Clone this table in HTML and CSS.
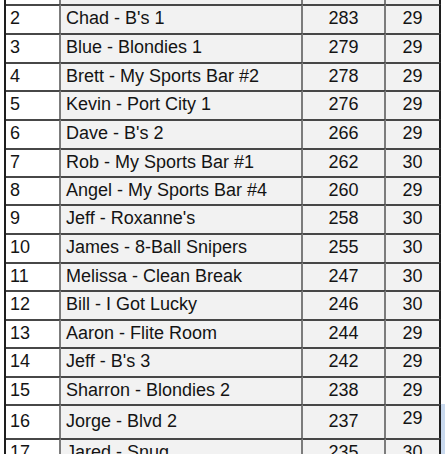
FILE: index.html
```html
<!DOCTYPE html>
<html>
<head>
<meta charset="utf-8">
<link rel="stylesheet" href="styles.css">
</head>
<body>
<div class="viewport">
  <div class="sheet">
    <div class="row r29"><div class="c n"></div><div class="c t"></div><div class="c m"></div><div class="c p"></div><div class="out"></div></div>
    <div class="row r29"><div class="c n">2</div><div class="c t">Chad - B's 1</div><div class="c m">283</div><div class="c p">29</div><div class="out"></div></div>
    <div class="row r29"><div class="c n">3</div><div class="c t">Blue - Blondies 1</div><div class="c m">279</div><div class="c p">29</div><div class="out"></div></div>
    <div class="row r28"><div class="c n">4</div><div class="c t">Brett - My Sports Bar #2</div><div class="c m">278</div><div class="c p">29</div><div class="out"></div></div>
    <div class="row r29"><div class="c n">5</div><div class="c t">Kevin - Port City 1</div><div class="c m">276</div><div class="c p">29</div><div class="out"></div></div>
    <div class="row r29"><div class="c n">6</div><div class="c t">Dave - B's 2</div><div class="c m">266</div><div class="c p">29</div><div class="out"></div></div>
    <div class="row r28"><div class="c n">7</div><div class="c t">Rob - My Sports Bar #1</div><div class="c m">262</div><div class="c p">30</div><div class="out"></div></div>
    <div class="row r28"><div class="c n">8</div><div class="c t">Angel - My Sports Bar #4</div><div class="c m">260</div><div class="c p">29</div><div class="out"></div></div>
    <div class="row r29"><div class="c n">9</div><div class="c t">Jeff - Roxanne's</div><div class="c m">258</div><div class="c p">30</div><div class="out"></div></div>
    <div class="row r29"><div class="c n">10</div><div class="c t">James - 8-Ball Snipers</div><div class="c m">255</div><div class="c p">30</div><div class="out"></div></div>
    <div class="row r28"><div class="c n">11</div><div class="c t">Melissa - Clean Break</div><div class="c m">247</div><div class="c p">30</div><div class="out"></div></div>
    <div class="row r29"><div class="c n">12</div><div class="c t">Bill - I Got Lucky</div><div class="c m">246</div><div class="c p">30</div><div class="out"></div></div>
    <div class="row r28"><div class="c n">13</div><div class="c t">Aaron - Flite Room</div><div class="c m">244</div><div class="c p">29</div><div class="out"></div></div>
    <div class="row r29"><div class="c n">14</div><div class="c t">Jeff - B's 3</div><div class="c m">242</div><div class="c p">29</div><div class="out"></div></div>
    <div class="row r28"><div class="c n">15</div><div class="c t">Sharron - Blondies 2</div><div class="c m">238</div><div class="c p">29</div><div class="out"></div></div>
    <div class="row r34"><div class="c n">16</div><div class="c t">Jorge - Blvd 2</div><div class="c m">237</div><div class="c p raised">29</div><div class="out sel"></div></div>
    <div class="row r29"><div class="c n">17</div><div class="c t">Jared - Snug</div><div class="c m">235</div><div class="c p">30</div><div class="out sel"></div></div>
  </div>
</div>
</body>
</html>
```

FILE: styles.css
```css
html, body {
  margin: 0;
  padding: 0;
  background: #ffffff;
}

.viewport {
  width: 445px;
  height: 454px;
  overflow: hidden;
}

.sheet {
  margin-top: -25px;
  margin-left: 4px;
  font-family: "Liberation Sans", Arial, sans-serif;
  font-size: 18px;
  color: #141414;
}

.row {
  display: grid;
  grid-template-columns: 2px 55px 242px 83px 55px 1fr;
}

.row::before {
  content: "";
  background: #1e1e1e;
}

.r28 { height: 28px; }
.r29 { height: 29px; }
.r34 { height: 34px; }

.c {
  box-sizing: border-box;
  display: flex;
  align-items: center;
  border-top: 2px solid #474747;
  border-right: 2px solid #7c7c7c;
  background: #f2f2f2;
  padding-bottom: 2px;
  white-space: nowrap;
  overflow: hidden;
}

.n {
  background: #ffffff;
  padding-left: 4px;
}

.t {
  padding-left: 5px;
}

.m, .p {
  justify-content: center;
}

.p {
  border-right: 2px solid #1e1e1e;
}

.raised {
  padding-bottom: 7px;
}

.out {
  background: #ffffff;
}

.out.sel {
  background: #c9d9ee;
}
```
